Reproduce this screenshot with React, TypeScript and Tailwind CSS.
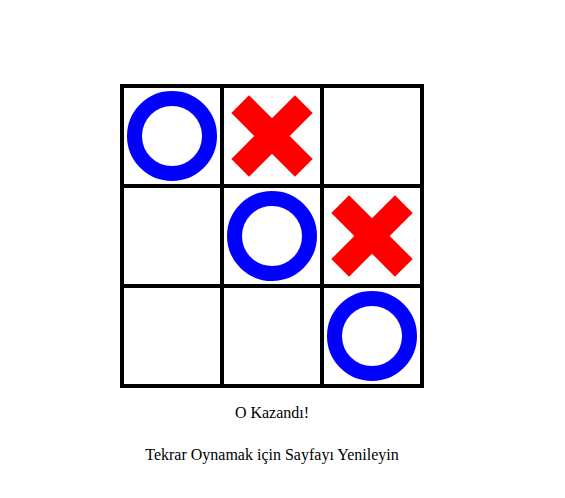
const board = ['O', 'X', '', '', 'O', 'X', '', '', 'O'];

const Circle = () => (
  <div className="w-[90px] h-[90px] rounded-full border-[15px] border-[#0000ff]" />
);

const Cross = () => (
  <div className="relative w-[82px] h-[82px]">
    <div className="absolute left-1/2 top-1/2 w-[90px] h-[25px] -translate-x-1/2 -translate-y-1/2 rotate-45 bg-[#ff0000]" />
    <div className="absolute left-1/2 top-1/2 w-[90px] h-[25px] -translate-x-1/2 -translate-y-1/2 -rotate-45 bg-[#ff0000]" />
  </div>
);

export default function App() {
  return (
    <div className="w-[544px] bg-white flex flex-col items-center pt-[84px] font-['Liberation_Serif',serif] text-black text-base">
      <div className="grid grid-cols-[repeat(3,100px)] border-2 border-black">
        {board.map((cell, i) => (
          <div
            key={i}
            className="w-[100px] h-[100px] border-2 border-black flex items-center justify-center"
          >
            {cell === 'O' && <Circle />}
            {cell === 'X' && <Cross />}
          </div>
        ))}
      </div>
      <p className="mt-[16px] leading-[18px]">O Kazandı!</p>
      <p className="mt-[24px] leading-[18px]">Tekrar Oynamak için Sayfayı Yenileyin</p>
    </div>
  );
}
